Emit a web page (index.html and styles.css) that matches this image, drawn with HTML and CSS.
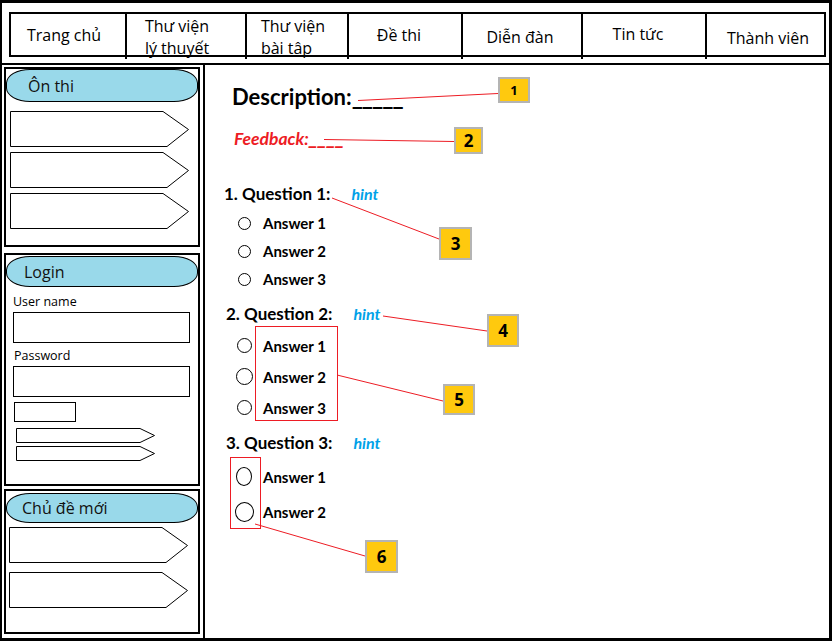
FILE: index.html
```html
<!DOCTYPE html>
<html lang="vi">
<head>
<meta charset="utf-8">
<title>Ôn thi - Mockup</title>
<link rel="stylesheet" href="styles.css">
</head>
<body>
<div class="page">
  <div class="frame">
    <header class="header">
      <nav class="nav">
        <a class="nav-item nav-home">Trang chủ</a>
        <a class="nav-item nav-two nav-lib1">Thư viện<br>lý thuyết</a>
        <a class="nav-item nav-two nav-lib2">Thư viện<br>bài tập</a>
        <a class="nav-item nav-exam">Đề thi</a>
        <a class="nav-item nav-forum">Diễn đàn</a>
        <a class="nav-item nav-news">Tin tức</a>
        <a class="nav-item nav-members">Thành viên</a>
      </nav>
    </header>
    <div class="body">
      <aside class="sidebar">
        <section class="panel panel-review">
          <div class="pill pill-review">Ôn thi</div>
          <div class="arrows arrows-review">
            <svg class="arrow arrow-lg" viewBox="0 0 179 36"><polygon points="0.5,0.5 153,0.5 178.5,18.5 157,35.5 0.5,35.5"/></svg>
            <svg class="arrow arrow-lg" viewBox="0 0 179 36"><polygon points="0.5,0.5 153,0.5 178.5,18.5 157,35.5 0.5,35.5"/></svg>
            <svg class="arrow arrow-lg" viewBox="0 0 179 36"><polygon points="0.5,0.5 153,0.5 178.5,18.5 157,35.5 0.5,35.5"/></svg>
          </div>
        </section>
        <section class="panel panel-login">
          <div class="pill pill-login">Login</div>
          <div class="login-form">
            <div class="field-label">User name</div>
            <div class="field"></div>
            <div class="field-label field-label-pass">Password</div>
            <div class="field"></div>
            <div class="small-box"></div>
            <div class="arrows arrows-small">
              <svg class="arrow arrow-sm" viewBox="0 0 139 15"><polygon points="0.5,0.5 124,0.5 138.5,7.5 124,14.5 0.5,14.5"/></svg>
              <svg class="arrow arrow-sm" viewBox="0 0 139 15"><polygon points="0.5,0.5 124,0.5 138.5,7.5 124,14.5 0.5,14.5"/></svg>
            </div>
          </div>
        </section>
        <section class="panel panel-topics">
          <div class="pill pill-topics">Chủ đề mới</div>
          <div class="arrows arrows-topics">
            <svg class="arrow arrow-lg" viewBox="0 0 179 36"><polygon points="0.5,0.5 153,0.5 178.5,18.5 157,35.5 0.5,35.5"/></svg>
            <svg class="arrow arrow-lg" viewBox="0 0 179 36"><polygon points="0.5,0.5 153,0.5 178.5,18.5 157,35.5 0.5,35.5"/></svg>
          </div>
        </section>
      </aside>
      <main class="main">
        <div class="description">Description:<span class="blank">_____</span></div>
        <div class="feedback">Feedback:<span class="blank">____</span></div>

        <section class="question q1">
          <div class="q-head"><span class="q-title">1. Question 1:</span><span class="hint">hint</span></div>
          <div class="answers">
            <div class="answer"><span class="radio-cell"><span class="radio"></span></span><span class="answer-text">Answer 1</span></div>
            <div class="answer"><span class="radio-cell"><span class="radio"></span></span><span class="answer-text">Answer 2</span></div>
            <div class="answer"><span class="radio-cell"><span class="radio"></span></span><span class="answer-text">Answer 3</span></div>
          </div>
        </section>

        <section class="question q2">
          <div class="q-head"><span class="q-title">2. Question 2:</span><span class="hint">hint</span></div>
          <div class="answers">
            <div class="answer"><span class="radio-cell"><span class="radio"></span></span><span class="answer-text">Answer 1</span></div>
            <div class="answer"><span class="radio-cell"><span class="radio radio-big"></span></span><span class="answer-text">Answer 2</span></div>
            <div class="answer"><span class="radio-cell"><span class="radio"></span></span><span class="answer-text">Answer 3</span></div>
          </div>
        </section>

        <section class="question q3">
          <div class="q-head"><span class="q-title">3. Question 3:</span><span class="hint">hint</span></div>
          <div class="answers">
            <div class="answer"><span class="radio-cell"><span class="radio"></span></span><span class="answer-text">Answer 1</span></div>
            <div class="answer"><span class="radio-cell"><span class="radio radio-big"></span></span><span class="answer-text">Answer 2</span></div>
          </div>
        </section>
      </main>
    </div>
  </div>

  <div class="overlay">
    <svg class="overlay-lines" viewBox="0 0 832 641" width="832" height="641">
      <g stroke="#ed1c24" stroke-width="1" fill="none">
        <line x1="358" y1="100.5" x2="498" y2="93.5"/>
        <line x1="324" y1="139.5" x2="454" y2="141.5"/>
        <line x1="332" y1="198" x2="439" y2="239"/>
        <line x1="383" y1="316" x2="487" y2="331"/>
        <line x1="337" y1="375" x2="443" y2="401"/>
        <line x1="255" y1="524" x2="365" y2="556"/>
        <rect x="255.5" y="326.5" width="82" height="94"/>
        <rect x="230.5" y="457.5" width="30" height="71"/>
      </g>
    </svg>
    <div class="tag tag-1">1</div>
    <div class="tag tag-2">2</div>
    <div class="tag tag-3">3</div>
    <div class="tag tag-4">4</div>
    <div class="tag tag-5">5</div>
    <div class="tag tag-6">6</div>
  </div>
</div>
</body>
</html>
```

FILE: styles.css
```css
* {
  box-sizing: border-box;
}

body {
  margin: 0;
  background: #fff;
  color: #000;
  font-family: "Open Sans", "Noto Sans", sans-serif;
}

.page {
  position: relative;
  width: 832px;
  height: 641px;
  overflow: hidden;
}

.frame {
  width: 832px;
  height: 641px;
  border: 3px solid #000;
  border-left-width: 2px;
  display: flex;
  flex-direction: column;
}

/* ---------- top navigation ---------- */
.header {
  height: 62px;
  flex: none;
  border-bottom: 2px solid #000;
  padding: 9px 0 0 7px;
}

.nav {
  display: grid;
  grid-template-columns: 116px 120px 102px 114px 120px 124px 1fr;
  width: 817px;
  height: 45px;
  border: 2px solid #000;
}

.nav-item {
  display: flex;
  align-items: center;
  justify-content: center;
  border-right: 2px solid #000;
  font-size: 16px;
  line-height: 22px;
  color: #000;
  text-decoration: none;
  white-space: nowrap;
}

.nav-item:last-child {
  border-right: 0;
}

.nav-two {
  text-align: left;
  padding-top: 1px;
}

.nav-home {
  padding: 0 8px 3px 0;
}

.nav-lib1 {
  padding-right: 18px;
}

.nav-lib2 {
  padding-right: 8px;
}

.nav-exam {
  padding: 0 12px 3px 0;
}

.nav-forum {
  padding-right: 4px;
}

.nav-news {
  padding: 0 12px 6px 0;
}

.nav-members {
  padding: 3px 0 0 5px;
}

/* ---------- body ---------- */
.body {
  flex: 1;
  display: flex;
  min-height: 0;
}

.sidebar {
  width: 203px;
  flex: none;
  border-right: 2px solid #000;
  padding: 2px 3px 0 2px;
  display: flex;
  flex-direction: column;
}

.panel {
  border: 2px solid #000;
  display: flex;
  flex-direction: column;
  flex: none;
}

.panel-review {
  height: 180px;
}

.panel-login {
  height: 233px;
  margin-top: 6px;
}

.panel-topics {
  height: 145px;
  margin-top: 3px;
}

.pill {
  display: flex;
  align-items: center;
  background: #99d9ea;
  border: 1px solid #000;
  border-radius: 24px / 14px;
  font-size: 16px;
  color: #111;
  flex: none;
}

.pill-review {
  height: 33px;
  padding-left: 21px;
}

.pill-login {
  height: 31px;
  margin-top: 1px;
  padding-left: 17px;
}

.pill-topics {
  height: 30px;
  margin-top: 2px;
  padding-left: 15px;
}

.arrows {
  display: flex;
  flex-direction: column;
}

.arrow {
  display: block;
  fill: #fff;
  stroke: #000;
  stroke-width: 1;
}

.arrow-lg {
  width: 179px;
  height: 36px;
}

.arrow-sm {
  width: 139px;
  height: 15px;
}

.arrows-review {
  margin: 9px 0 0 4px;
  gap: 5px;
}

.arrows-topics {
  margin: 4px 0 0 3px;
  gap: 9px;
}

.arrows-small {
  margin: 6px 0 0 3px;
  gap: 3px;
}

.login-form {
  display: flex;
  flex-direction: column;
  padding-left: 7px;
}

.field-label {
  font-size: 12.5px;
  line-height: 16px;
  margin-top: 7px;
}

.field-label-pass {
  margin-top: 5px;
  padding-left: 1px;
}

.field {
  width: 177px;
  height: 31px;
  border: 1px solid #000;
  margin-top: 2px;
}

.small-box {
  width: 62px;
  height: 20px;
  border: 1px solid #000;
  margin: 5px 0 0 1px;
}

/* ---------- main ---------- */
.main {
  flex: 1;
  padding-top: 18px;
  font-family: "Lato", "Open Sans", sans-serif;
}

.description {
  font-size: 22px;
  font-weight: 700;
  line-height: 28px;
  margin-left: 27px;
}

.blank {
  font-size: 24px;
  line-height: 0;
  letter-spacing: -1px;
}

.feedback {
  font-size: 17.5px;
  font-style: italic;
  font-weight: 700;
  line-height: 20px;
  color: #ed1c24;
  margin: 18px 0 0 29px;
}

.feedback .blank {
  font-size: 21px;
  letter-spacing: -0.5px;
}

.q-head {
  display: flex;
  align-items: baseline;
  font-size: 17px;
  font-weight: 700;
  line-height: 22px;
  margin-left: 19px;
}

.q2 .q-head,
.q3 .q-head {
  margin-left: 21px;
}

.hint {
  font-size: 16px;
  font-style: italic;
  color: #00a2e8;
  margin-left: 21px;
}

.q1 {
  margin-top: 34px;
}

.q2 {
  margin-top: 10px;
}

.q3 {
  margin-top: 9px;
}

.answers {
  display: flex;
  flex-direction: column;
  margin-top: 5px;
}

.q1 .answers {
  margin-top: 4px;
}

.answer {
  display: flex;
  align-items: center;
  height: 28px;
  padding-left: 26px;
  font-size: 15px;
  font-weight: 700;
}

.q2 .answer {
  height: 31px;
}

.q3 .answer {
  height: 35px;
}

.radio-cell {
  width: 26px;
  display: flex;
  justify-content: center;
}

.radio {
  width: 13px;
  height: 13px;
  border: 1px solid #000;
  border-radius: 50%;
}

.q2 .radio {
  width: 15px;
  height: 15px;
}

.q2 .radio-big {
  width: 17px;
  height: 17px;
}

.q3 .radio {
  width: 16px;
  height: 19px;
}

.q3 .radio-big {
  width: 19px;
  height: 20px;
}

.answer-text {
  margin-left: 6px;
}

/* ---------- annotation overlay ---------- */
.overlay {
  position: absolute;
  inset: 0;
  pointer-events: none;
}

.overlay-lines {
  position: absolute;
  left: 0;
  top: 0;
}

.tag {
  position: absolute;
  display: flex;
  align-items: center;
  justify-content: center;
  background: #ffc90e;
  border: 2px solid #b4b4b4;
  font-family: "Open Sans", sans-serif;
  font-weight: 700;
  font-size: 17px;
  color: #000;
}

.tag-1 {
  left: 498px;
  top: 77px;
  width: 32px;
  height: 26px;
  font-size: 13px;
}

.tag-2 {
  left: 454px;
  top: 127px;
  width: 29px;
  height: 27px;
}

.tag-3 {
  left: 439px;
  top: 227px;
  width: 33px;
  height: 33px;
}

.tag-4 {
  left: 487px;
  top: 314px;
  width: 32px;
  height: 33px;
}

.tag-5 {
  left: 443px;
  top: 384px;
  width: 32px;
  height: 31px;
}

.tag-6 {
  left: 365px;
  top: 540px;
  width: 33px;
  height: 33px;
}
```
